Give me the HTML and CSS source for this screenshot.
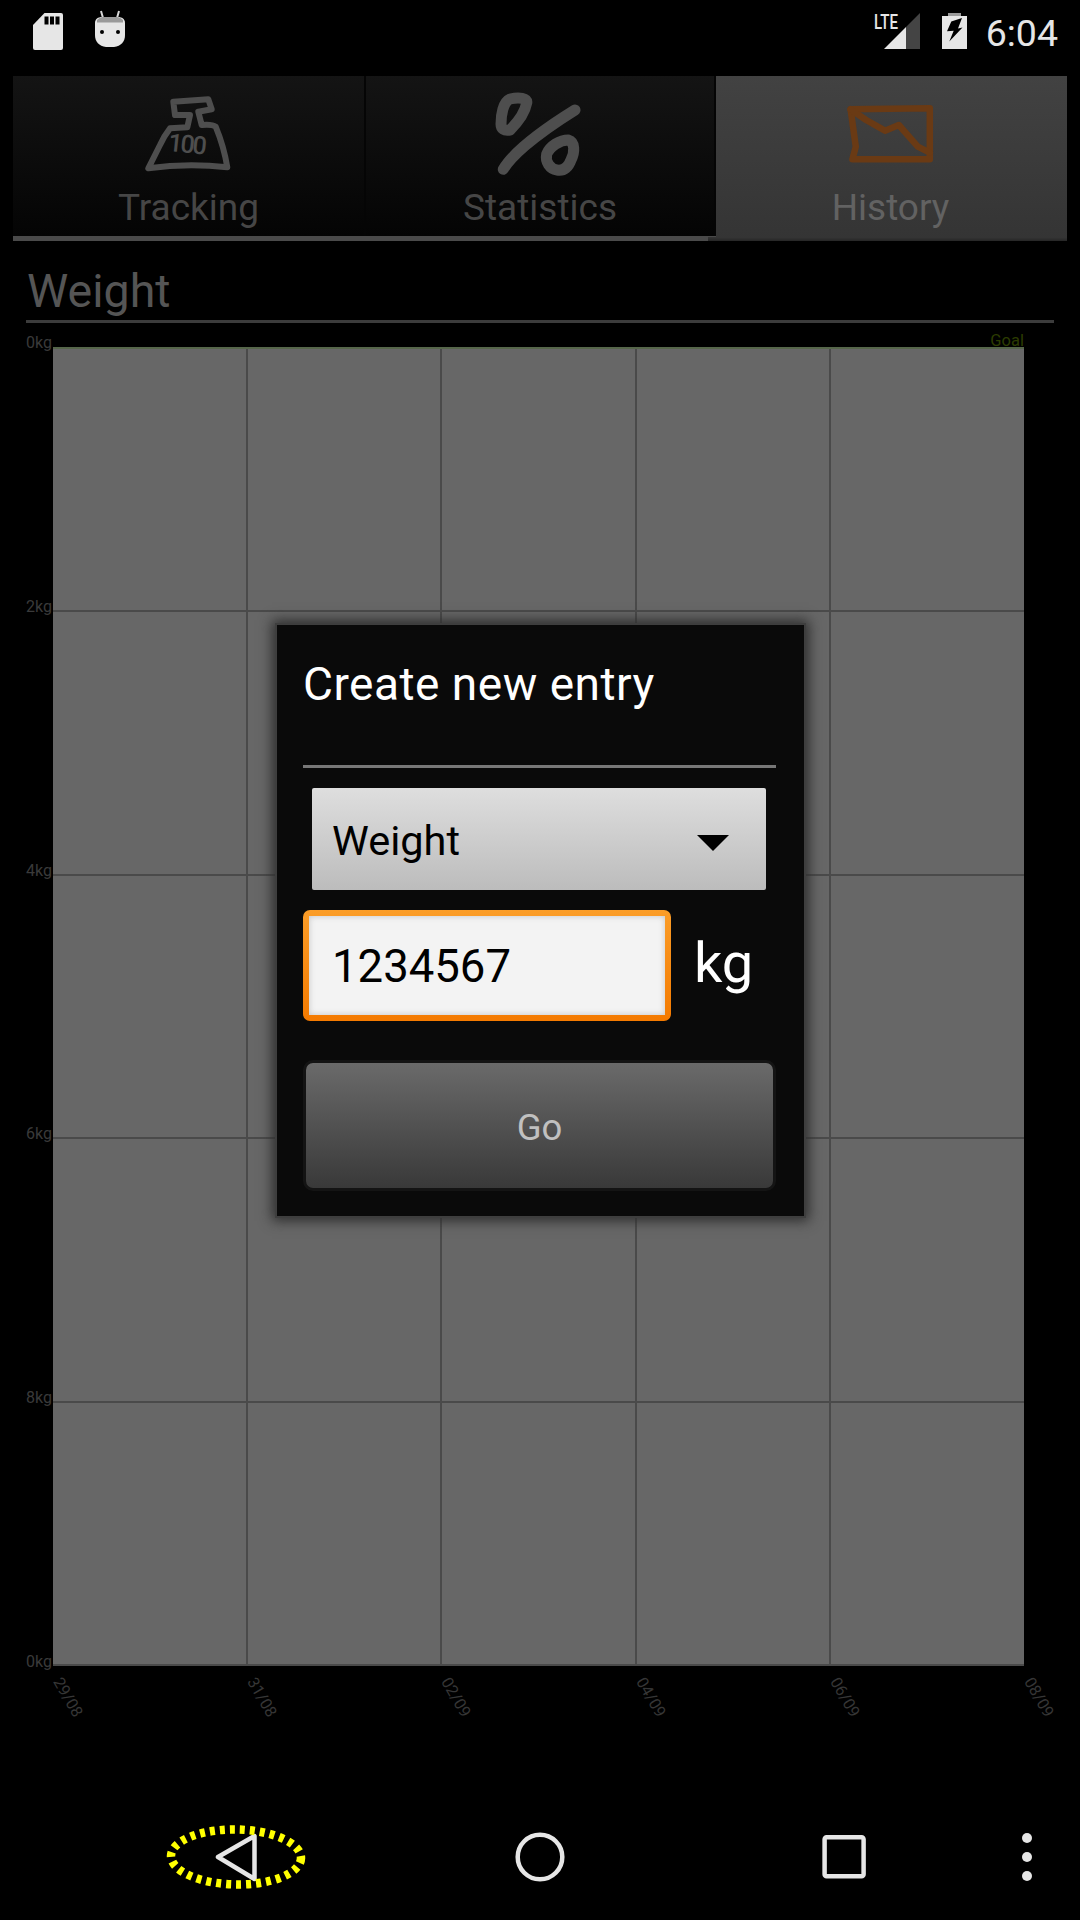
FILE: index.html
```html
<!DOCTYPE html>
<html lang="en">
<head>
<meta charset="utf-8">
<title>Create new entry</title>
<link rel="stylesheet" href="styles.css">
</head>
<body>
<div class="page">
  <header class="status">
    <div class="status-left">
      <svg class="ico" width="30" height="40" viewBox="0 0 30 40"><path class="ico-fill" d="M11.5 3H28a2 2 0 0 1 2 2v33a2 2 0 0 1-2 2H2a2 2 0 0 1-2-2V15z"/><path class="ico-cut" d="M11.5 6.5h4v8h-4zM17 6.5h4v8h-4zM22.500 6.500h4v8h-4z"/></svg>
      <svg class="ico" width="30" height="40" viewBox="0 0 30 40"><path class="ico-line" d="M6 1l2 7M24 1l-2 7"/><path class="ico-fill" d="M7 7h16c4 0 7 2 7 6v12c0 7-4 11-11 12h-8C4 36 0 32 0 25V13c0-4 3-6 7-6z"/><path class="ico-band" d="M2 10c2-2 4-3 6-3h14c2 0 4 1 6 3v2.500H2z"/><circle class="ico-cut" cx="7" cy="22" r="2"/><circle class="ico-cut" cx="23" cy="22" r="2"/></svg>
    </div>
    <div class="status-right">
      <svg class="ico" width="46" height="40" viewBox="0 0 46 40"><text class="lte" x="0" y="19" textLength="24" lengthAdjust="spacingAndGlyphs">LTE</text><path class="sig-dim" d="M46 3v36H32V17z"/><path class="ico-fill" d="M32 17v22H10z"/></svg>
      <svg class="ico" width="25" height="40" viewBox="0 0 25 40"><path class="ico-band" d="M6 3h13v3H6z"/><path class="ico-fill" d="M0 6h25v33H0z"/><path class="ico-cut" d="M9.300 11.500L20 8l-4 10.500 4.500-1L7.300 31.500l4.400-10.800-6.700.5z"/></svg>
      <span class="clock">6:04</span>
    </div>
  </header>

  <nav class="tabs">
    <div class="tab">
      <div class="tab-icon">
        <svg class="hand hand-track" width="100" height="80" viewBox="0 0 100 80"><path d="M9.300 76.300Q48 71 88.300 75.300Q85 55 76.700 34.700Q73 32 62.700 33L59.300 19.700L72.700 17.300L69.300 7.300L34.300 9.700L36 23H51L48.300 35.300L31 36.300Q25 44 21 53z"/><text class="hand-num" x="29" y="61" transform="rotate(6 50 55)">100</text></svg>
      </div>
      <span class="tab-label">Tracking</span>
    </div>
    <div class="tab">
      <div class="tab-icon">
        <svg class="hand hand-bold" width="100" height="90" viewBox="0 0 100 90"><path d="M20 11C29 9 38 10 36.700 15C35 24 28 34 20 42C14 43 11 41 11 36C11 27 13 14 20 11z"/><path d="M13.300 81.300C20 70 40 50 85 22"/><path d="M56.700 66C60 58 70 52 78.300 52C85 54 85 64 81 72C78 80 73 83 67 82C60 81 55 74 56.700 66z"/></svg>
      </div>
      <span class="tab-label">Statistics</span>
    </div>
    <div class="tab tab-active">
      <div class="tab-icon">
        <svg class="hand hand-hist" width="100" height="70" viewBox="0 0 100 70"><path d="M10.600 9.300L89.800 8.300V59.300H12.400L15.800 46.700z"/><path d="M10.600 9.300L26.100 20L45 30.700L58.800 25L77.800 46.700L89.800 52.700"/></svg>
      </div>
      <span class="tab-label">History</span>
    </div>
  </nav>

  <h1 class="title">Weight</h1>

  <section class="chart">
    <div class="y-axis">
      <span>0kg</span><span>2kg</span><span>4kg</span><span>6kg</span><span>8kg</span><span>0kg</span>
    </div>
    <div class="plot-wrap">
      <span class="goal">Goal</span>
      <div class="plot">
        <i></i><i></i><i></i><i></i><i></i>
        <i></i><i></i><i></i><i></i><i></i>
        <i></i><i></i><i></i><i></i><i></i>
        <i></i><i></i><i></i><i></i><i></i>
        <i></i><i></i><i></i><i></i><i></i>
      </div>
    </div>
    <div class="x-axis">
      <span>29/08</span><span>31/08</span><span>02/09</span><span>04/09</span><span>06/09</span><span>08/09</span>
    </div>
  </section>

  <footer class="nav">
    <svg class="nav-back" width="144" height="70" viewBox="0 0 144 70"><path class="nav-line" d="M54 35L90.500 14V57z"/><ellipse class="nav-ring" cx="72" cy="35" rx="65" ry="27.500" transform="rotate(1 72 35)"/></svg>
    <svg class="nav-home" width="60" height="70" viewBox="0 0 60 70"><circle class="nav-line" cx="30" cy="35" r="22.300"/></svg>
    <svg class="nav-recent" width="60" height="70" viewBox="0 0 60 70"><rect class="nav-line" x="10.600" y="15.200" width="39" height="39" rx="2"/></svg>
    <svg class="nav-menu" width="40" height="70" viewBox="0 0 40 70"><circle class="nav-dot" cx="20" cy="16" r="5"/><circle class="nav-dot" cx="20" cy="35" r="5"/><circle class="nav-dot" cx="20" cy="54" r="5"/></svg>
  </footer>

  <div class="dialog">
    <h2 class="dialog-title">Create new entry</h2>
    <div class="spinner">
      <span>Weight</span>
      <b class="arrow"></b>
    </div>
    <div class="entry">
      <div class="field-wrap"><div class="field">1234567</div></div>
      <span class="unit">kg</span>
    </div>
    <div class="go">Go</div>
  </div>
</div>
</body>
</html>
```
FILE: styles.css
```css
* { box-sizing: border-box; }
html, body { margin: 0; padding: 0; background: #000; }
body { font-family: Roboto, "Liberation Sans", sans-serif; }

.page {
  position: relative;
  width: 1080px;
  height: 1920px;
  overflow: hidden;
  display: flex;
  flex-direction: column;
  background: #000;
}

/* status bar */
.status {
  height: 76px;
  flex: none;
  display: flex;
  justify-content: space-between;
  align-items: center;
  padding: 0 22px 16px 33px;
}
.status-left { display: flex; align-items: center; gap: 32px; }
.status-right { display: flex; align-items: center; gap: 22px; }
.ico { display: block; }
.ico-fill { fill: #e6e6e6; }
.ico-cut { fill: #000; }
.ico-band { fill: #9a9a9a; }
.ico-line { fill: none; stroke: #d8d8d8; stroke-width: 2; }
.sig-dim { fill: #444; }
.lte { font-family: Roboto, sans-serif; font-size: 21px; font-weight: 500; fill: #e6e6e6; }
.clock {
  color: #e6e6e6;
  font-size: 37.500px;
  line-height: 40px;
  margin: 5px 0 0 -3px;
}

/* tabs */
.tabs {
  flex: none;
  height: 165px;
  margin: 0 13px 0 13px;
  display: flex;
  border-bottom: 5px solid #4a4a4a;
}
.tab {
  width: 350px;
  display: flex;
  flex-direction: column;
  align-items: center;
  height: 160px;
  background: linear-gradient(#141414, #040404);
  border-right: 2px solid #050505;
  color: #464646;
}
.tab:nth-child(1) { width: 353px; }
.tab-active {
  position: relative;
  width: 351px;
  height: 165px;
  margin-bottom: -5px;
  background: linear-gradient(#424242, #343434);
  border-right: 0;
  color: #626262;
}
.tab-active::after {
  content: "";
  position: absolute;
  left: -8px;
  right: 0;
  bottom: 0;
  height: 4px;
  background: linear-gradient(#363636, #262626);
}
.tab-icon {
  height: 110px;
  width: 100%;
  display: flex;
  align-items: center;
  justify-content: center;
}
.tab-label { font-size: 37px; line-height: 42px; margin-top: 1px; }
.tab-active .tab-label { margin-left: -2px; }
.hand { display: block; }
.hand path { fill: none; stroke: #4e4e4e; stroke-width: 6; stroke-linejoin: round; stroke-linecap: round; }
.hand-track { margin-top: 2px; }
.hand-bold { margin-top: 4px; margin-left: -1px; }
.hand-bold path { stroke-width: 11; }
.hand-hist { margin: 8px 0 0 -3px; }
.hand-hist path { stroke: #6a3a14; stroke-width: 6.500; }
.hand-num {
  font-family: Roboto, sans-serif;
  font-size: 25px;
  font-weight: 500;
  letter-spacing: -2px;
  fill: #4e4e4e;
}

/* section title */
.title {
  flex: none;
  margin: 22px 26px 0;
  padding-left: 1px;
  height: 60px;
  font-size: 46.500px;
  line-height: 56px;
  font-weight: 400;
  color: #555;
  border-bottom: 3px solid #3c3c3c;
}

/* chart */
.chart {
  flex: none;
  margin-top: 24px;
  display: grid;
  grid-template-columns: 53px 971px;
  grid-template-rows: 1319px auto;
}
.y-axis {
  height: 1339px;
  margin-top: -14px;
  padding-right: 1px;
  display: flex;
  flex-direction: column;
  justify-content: space-between;
  align-items: flex-end;
  font-size: 16px;
  line-height: 20px;
  color: #3a3a3a;
}
.plot-wrap { position: relative; }
.goal {
  position: absolute;
  right: 0;
  top: -16px;
  font-size: 16.500px;
  line-height: 20px;
  color: #2c3c00;
}
.plot {
  height: 1319px;
  display: grid;
  grid-template-columns: 195px repeat(3, 194.300px) 1fr;
  grid-template-rows: repeat(5, 1fr);
  background: #676767;
  border-top: 2px solid #56664a;
}
.plot i {
  border-right: 2px solid #4a4a4a;
  border-bottom: 2px solid #4a4a4a;
}
.plot i:nth-child(5n) { border-right: 0; }
.x-axis {
  grid-column: 2;
  display: grid;
  grid-template-columns: repeat(6, 194.200px);
  font-size: 16px;
  line-height: 16px;
  color: #363636;
}
.x-axis span {
  display: block;
  width: 50px;
  margin: 9px 0 0 11px;
  transform: rotate(60deg);
  transform-origin: 0 0;
}

/* navigation bar */
.nav {
  margin-top: auto;
  height: 126px;
  flex: none;
  display: flex;
  align-items: center;
  padding: 0 0 0 163.500px;
}
.nav-home { margin-left: 202.500px; }
.nav-recent { margin-left: 244px; }
.nav-menu { margin-left: 133px; }
.nav-line { fill: none; stroke: #e6e6e6; stroke-width: 4.500; stroke-linejoin: round; }
.nav-dot { fill: #e6e6e6; }
.nav-ring { fill: none; stroke: #ffff00; stroke-width: 8.500; stroke-dasharray: 5 5; }

/* dialog */
.dialog {
  position: absolute;
  left: 275px;
  top: 623px;
  width: 531px;
  height: 595px;
  padding: 33px 28px 0 26px;
  display: flex;
  flex-direction: column;
  background: #0a0a0a;
  border: 2px solid #3e3e3e;
  box-shadow: 0 0 12px 3px #2e2e2e;
}
.dialog-title {
  margin: 0;
  height: 110px;
  font-size: 46px;
  letter-spacing: .5px;
  line-height: 52px;
  font-weight: 400;
  color: #fff;
  border-bottom: 3px solid #777;
}
.spinner {
  height: 102px;
  margin: 20px 10px 0 9px;
  padding: 2px 37px 0 20px;
  display: flex;
  justify-content: space-between;
  align-items: center;
  background: linear-gradient(#dedede, #bcbcbc);
  border-radius: 2px;
  font-size: 41.500px;
  color: #000;
}
.arrow {
  width: 0;
  height: 0;
  margin-top: 6px;
  border-left: 16px solid transparent;
  border-right: 16px solid transparent;
  border-top: 16px solid #000;
}
.entry {
  height: 111px;
  margin-top: 20px;
  display: flex;
  align-items: center;
}
.field-wrap {
  width: 368px;
  height: 111px;
  padding: 6px;
  border-radius: 7px;
  background: linear-gradient(#fb9d28, #f47a00);
}
.field {
  height: 100%;
  padding: 2px 0 0 23px;
  display: flex;
  align-items: center;
  background: #f3f3f3;
  box-shadow: inset 0 0 6px #c4c4c4;
  font-size: 45.500px;
  color: #000;
}
.unit {
  margin: 0 0 6px 23px;
  font-size: 56px;
  color: #fff;
}
.go {
  height: 125px;
  margin: 42px 3px 0;
  padding-top: 4px;
  display: flex;
  align-items: center;
  justify-content: center;
  border-radius: 7px;
  background: linear-gradient(#6a6a6a, #393939);
  box-shadow: 0 0 0 3px #141414;
  font-size: 36.500px;
  color: #c0c0c0;
}
```
